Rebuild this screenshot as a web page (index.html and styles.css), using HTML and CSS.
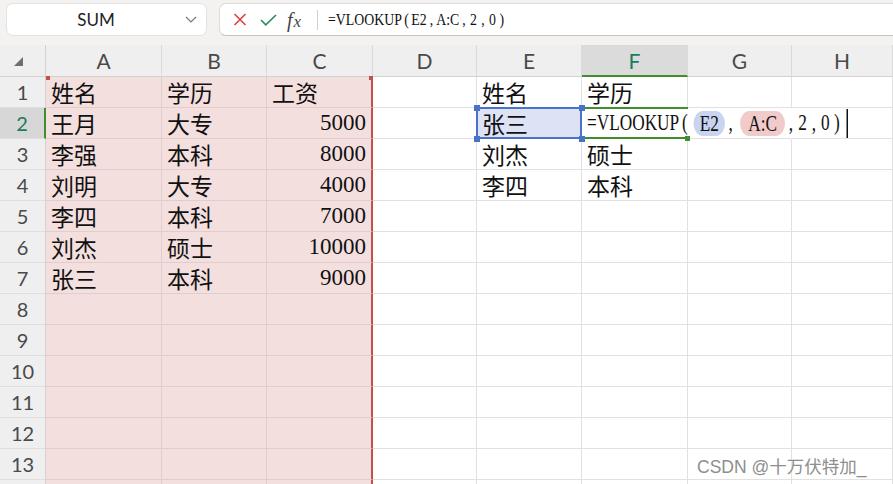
FILE: index.html
```html
<!DOCTYPE html>
<html lang="zh-CN">

<head>
    <meta charset="UTF-8">
    <title>VLOOKUP</title>
    <link rel="stylesheet" href="styles.css">
</head>

<body>

    <!-- Строка формул -->
    <div class="toolbar">
        <div class="name-box">
            <span class="name">SUM</span>
            <svg class="chevron" width="12" height="7" viewBox="0 0 12 7"><path d="M1 1l5 5 5-5" fill="none" stroke="#777" stroke-width="1.2"/></svg>
        </div>
        <div class="formula-box">
            <svg class="fb-cancel" width="14" height="13" viewBox="0 0 14 13"><path d="M1.5 1l11 11M12.5 1l-11 11" stroke="#d8453c" stroke-width="1.6" fill="none"/></svg>
            <svg class="fb-ok" width="17" height="12" viewBox="0 0 17 12"><path d="M1 6l4.8 4.8L16 1" stroke="#2a8a5e" stroke-width="1.6" fill="none"/></svg>
            <span class="fx">f<span class="fx-x">x</span></span>
            <span class="fb-sep"></span>
            <span class="fb-text">=VLOOKUP<span class="p">(</span>E2<span class="p">,</span>A:C<span class="p">,</span><span class="p">2</span><span class="p">,</span><span class="p">0</span><span class="p">)</span></span>
        </div>
    </div>

    <!-- Лист -->
    <div class="sheet">
        <div class="corner"><span class="tri"></span></div>
        <div class="ch">A</div>
        <div class="ch">B</div>
        <div class="ch">C</div>
        <div class="ch">D</div>
        <div class="ch">E</div>
        <div class="ch active">F</div>
        <div class="ch">G</div>
        <div class="ch">H</div>

        <div class="rh">1</div>
        <div class="cell rng rng-top-left">姓名</div>
        <div class="cell rng">学历</div>
        <div class="cell rng rng-end rng-top-right">工资</div>
        <div class="cell"></div>
        <div class="cell">姓名</div>
        <div class="cell">学历</div>
        <div class="cell"></div>
        <div class="cell"></div>

        <div class="rh active">2</div>
        <div class="cell rng">王月</div>
        <div class="cell rng">大专</div>
        <div class="cell rng rng-end num">5000</div>
        <div class="cell"></div>
        <div class="cell ref">张三
            <span class="ref-frame"></span>
            <span class="handle h-tl"></span>
            <span class="handle h-tr"></span>
            <span class="handle h-bl"></span>
            <span class="handle h-br"></span>
        </div>
        <div class="cell edit">
            <span class="edit-frame"></span>
            <span class="edit-handle"></span>
            <span class="edit-text">=VLOOKUP<span class="p">(</span><span class="pill pill-blue">E2</span><span class="p">,</span><span class="pill pill-red">A:C</span><span class="p">,</span><span class="p">2</span><span class="p">,</span><span class="p">0</span><span class="p">)</span><span class="caret"></span></span>
        </div>
        <div class="cell no-right"></div>
        <div class="cell"></div>

        <div class="rh">3</div>
        <div class="cell rng">李强</div>
        <div class="cell rng">本科</div>
        <div class="cell rng rng-end num">8000</div>
        <div class="cell"></div>
        <div class="cell">刘杰</div>
        <div class="cell">硕士</div>
        <div class="cell"></div>
        <div class="cell"></div>

        <div class="rh">4</div>
        <div class="cell rng">刘明</div>
        <div class="cell rng">大专</div>
        <div class="cell rng rng-end num">4000</div>
        <div class="cell"></div>
        <div class="cell">李四</div>
        <div class="cell">本科</div>
        <div class="cell"></div>
        <div class="cell"></div>

        <div class="rh">5</div>
        <div class="cell rng">李四</div>
        <div class="cell rng">本科</div>
        <div class="cell rng rng-end num">7000</div>
        <div class="cell"></div>
        <div class="cell"></div>
        <div class="cell"></div>
        <div class="cell"></div>
        <div class="cell"></div>

        <div class="rh">6</div>
        <div class="cell rng">刘杰</div>
        <div class="cell rng">硕士</div>
        <div class="cell rng rng-end num">10000</div>
        <div class="cell"></div>
        <div class="cell"></div>
        <div class="cell"></div>
        <div class="cell"></div>
        <div class="cell"></div>

        <div class="rh">7</div>
        <div class="cell rng">张三</div>
        <div class="cell rng">本科</div>
        <div class="cell rng rng-end num">9000</div>
        <div class="cell"></div>
        <div class="cell"></div>
        <div class="cell"></div>
        <div class="cell"></div>
        <div class="cell"></div>

        <div class="rh">8</div>
        <div class="cell rng"></div>
        <div class="cell rng"></div>
        <div class="cell rng rng-end"></div>
        <div class="cell"></div>
        <div class="cell"></div>
        <div class="cell"></div>
        <div class="cell"></div>
        <div class="cell"></div>

        <div class="rh">9</div>
        <div class="cell rng"></div>
        <div class="cell rng"></div>
        <div class="cell rng rng-end"></div>
        <div class="cell"></div>
        <div class="cell"></div>
        <div class="cell"></div>
        <div class="cell"></div>
        <div class="cell"></div>

        <div class="rh">10</div>
        <div class="cell rng"></div>
        <div class="cell rng"></div>
        <div class="cell rng rng-end"></div>
        <div class="cell"></div>
        <div class="cell"></div>
        <div class="cell"></div>
        <div class="cell"></div>
        <div class="cell"></div>

        <div class="rh">11</div>
        <div class="cell rng"></div>
        <div class="cell rng"></div>
        <div class="cell rng rng-end"></div>
        <div class="cell"></div>
        <div class="cell"></div>
        <div class="cell"></div>
        <div class="cell"></div>
        <div class="cell"></div>

        <div class="rh">12</div>
        <div class="cell rng"></div>
        <div class="cell rng"></div>
        <div class="cell rng rng-end"></div>
        <div class="cell"></div>
        <div class="cell"></div>
        <div class="cell"></div>
        <div class="cell"></div>
        <div class="cell"></div>

        <div class="rh">13</div>
        <div class="cell rng"></div>
        <div class="cell rng"></div>
        <div class="cell rng rng-end"></div>
        <div class="cell"></div>
        <div class="cell"></div>
        <div class="cell"></div>
        <div class="cell"></div>
        <div class="cell"></div>

        <!-- строка 14 видна лишь краем -->
        <div class="rh"></div>
        <div class="cell rng"></div>
        <div class="cell rng"></div>
        <div class="cell rng rng-end"></div>
        <div class="cell"></div>
        <div class="cell"></div>
        <div class="cell"></div>
        <div class="cell"></div>
        <div class="cell"></div>
    </div>

    <div class="watermark">CSDN @十万伏特加_</div>

</body>

</html>
```

FILE: styles.css
```css
/* Сброс */
* {
    margin: 0;
    padding: 0;
    box-sizing: border-box;
}

body {
    width: 893px;
    height: 484px;
    overflow: hidden;
    position: relative;
    background: #fff;
    color: #111;
    font-family: "Liberation Serif", "Noto Sans CJK SC", serif;
}

/* Строка формул */
.toolbar {
    height: 45px;
    background: #f3f2f0;
    display: flex;
    gap: 12px;
    padding: 3px 0 9px 6px;
}

.name-box {
    width: 201px;
    height: 33px;
    background: #fff;
    border: 1px solid #e4e2e0;
    border-radius: 7px;
    display: flex;
    align-items: center;
    padding-right: 9px;
}

.name-box .name {
    flex: 1;
    text-align: center;
    font-family: Lato, "Noto Sans", sans-serif;
    font-size: 17px;
    color: #222;
}

.formula-box {
    flex: 1;
    height: 33px;
    background: #fff;
    border: 1px solid #dedcda;
    border-right: none;
    border-bottom-color: #c2c2c2;
    border-radius: 7px 0 0 7px;
    display: flex;
    align-items: center;
    padding-left: 13px;
}

.fb-ok {
    margin-left: 13px;
}

.fx {
    margin-left: 10px;
    font-family: "Liberation Serif", serif;
    font-style: italic;
    font-size: 20px;
    color: #444;
    line-height: 1;
}

.fx-x {
    font-size: 17px;
    margin-left: 1px;
}

.fb-sep {
    width: 1px;
    height: 20px;
    background: #cfcfcf;
    margin-left: 16px;
}

/* узкий «宋体»-вид: сжимаем Times по горизонтали */
.fb-text {
    display: inline-block;
    margin-left: 10px;
    font-family: "Liberation Serif", serif;
    font-size: 17.5px;
    color: #111;
    white-space: nowrap;
    transform: scaleX(0.79);
    transform-origin: left center;
}

.fb-text .p {
    display: inline-block;
    width: 12px;
    text-align: center;
}

/* Сетка листа */
.sheet {
    display: grid;
    grid-template-columns: 46px 116px 105px 106px 104px 105px 106px 104px 101px;
    grid-template-rows: 32px;
    grid-auto-rows: 31px;
}

.corner {
    background: #efefef;
    border-right: 1px solid #d2d2d2;
    border-bottom: 1px solid #d2d2d2;
    padding: 12px 0 0 14px;
}

.tri {
    display: block;
    width: 0;
    height: 0;
    border-left: 9px solid transparent;
    border-bottom: 9px solid #6e6e6e;
}

.ch {
    background: #efefef;
    border-right: 1px solid #dadada;
    border-bottom: 1px solid #d2d2d2;
    display: flex;
    align-items: center;
    justify-content: center;
    font-family: Lato, "Noto Sans", sans-serif;
    font-size: 21px;
    color: #4a4a4a;
}

.ch.active {
    background: #dbdbdb;
    color: #1e7a5c;
    border-bottom: 2px solid #3f8f2f;
}

.rh {
    background: #efefef;
    border-right: 1px solid #d2d2d2;
    border-bottom: 1px solid #dedede;
    display: flex;
    align-items: center;
    justify-content: center;
    font-family: Lato, "Noto Sans", sans-serif;
    font-size: 20px;
    color: #4a4a4a;
}

.rh.active {
    background: #d7d7d7;
    color: #1e7a5c;
    border-right: 2px solid #3f8f2f;
}

.cell {
    border-right: 1px solid #e1e1e1;
    border-bottom: 1px solid #e1e1e1;
    display: flex;
    align-items: center;
    padding: 0 5px;
    font-size: 23px;
    white-space: nowrap;
    overflow: hidden;
}

.cell.num {
    justify-content: flex-end;
    padding-right: 5px;
}

/* Диапазон A:C */
.rng {
    background: #f4dfdf;
    border-color: #e2cccc;
    position: relative;
    overflow: visible;
}

.rng-end {
    border-right: 2px solid #c4504e;
}

.rng-top-left::before,
.rng-top-right::before {
    content: "";
    position: absolute;
    top: -1px;
    width: 4px;
    height: 4px;
    background: #c4504e;
}

.rng-top-left::before {
    left: 0;
}

.rng-top-right::before {
    right: -2px;
}

/* Ссылка E2 */
.ref {
    position: relative;
    overflow: visible;
    z-index: 3;
    background: #dde2f4;
}

.ref-frame {
    position: absolute;
    top: -1px;
    left: -1px;
    right: -1px;
    bottom: -1px;
    border: 2px solid #4a72c8;
}

.handle {
    position: absolute;
    width: 6px;
    height: 6px;
    background: #4a72c8;
}

.h-tl { top: -3px; left: -3px; }
.h-tr { top: -3px; right: -4px; }
.h-bl { bottom: -4px; left: -3px; }
.h-br { bottom: -4px; right: -4px; }

/* Редактируемая ячейка F2 */
.edit {
    position: relative;
    overflow: visible;
    z-index: 2;
    border-right-color: #fff;
    padding-left: 5px;
}

.no-right {
    border-right-color: #fff;
}

.edit-frame {
    position: absolute;
    top: -1px;
    left: 0;
    width: 106px;
    bottom: -1px;
    border-top: 2px solid #3f8f2f;
    border-bottom: 2px solid #3f8f2f;
}

.edit-handle {
    position: absolute;
    right: -3px;
    bottom: -3px;
    width: 5px;
    height: 5px;
    background: #3f8f2f;
}

.edit-text {
    display: inline-flex;
    align-items: center;
    flex-shrink: 0;
    font-family: "Liberation Serif", serif;
    font-size: 23px;
    color: #111;
    transform: scaleX(0.75);
    transform-origin: left center;
}

.edit-text .p {
    display: inline-block;
    width: 15.3px;
    text-align: center;
}

.pill {
    display: inline-block;
    height: 25px;
    line-height: 25px;
    border-radius: 13px;
    padding: 0 8px;
    margin-left: 4px;
}

.pill-red {
    padding: 0 11px;
    margin-left: 5px;
}

.pill-blue {
    background: #c8d4f0;
}

.pill-red {
    background: #f1caca;
}

.caret {
    display: inline-block;
    flex-shrink: 0;
    width: 2.5px;
    height: 29px;
    background: #111;
    margin-left: 5px;
}

/* Водяной знак */
.watermark {
    position: absolute;
    left: 697px;
    top: 453px;
    font-family: "Liberation Sans", "Noto Sans CJK SC", sans-serif;
    font-size: 17.5px;
    color: #8e8e8e;
    text-shadow: 0 0 2px #fff;
}
```
